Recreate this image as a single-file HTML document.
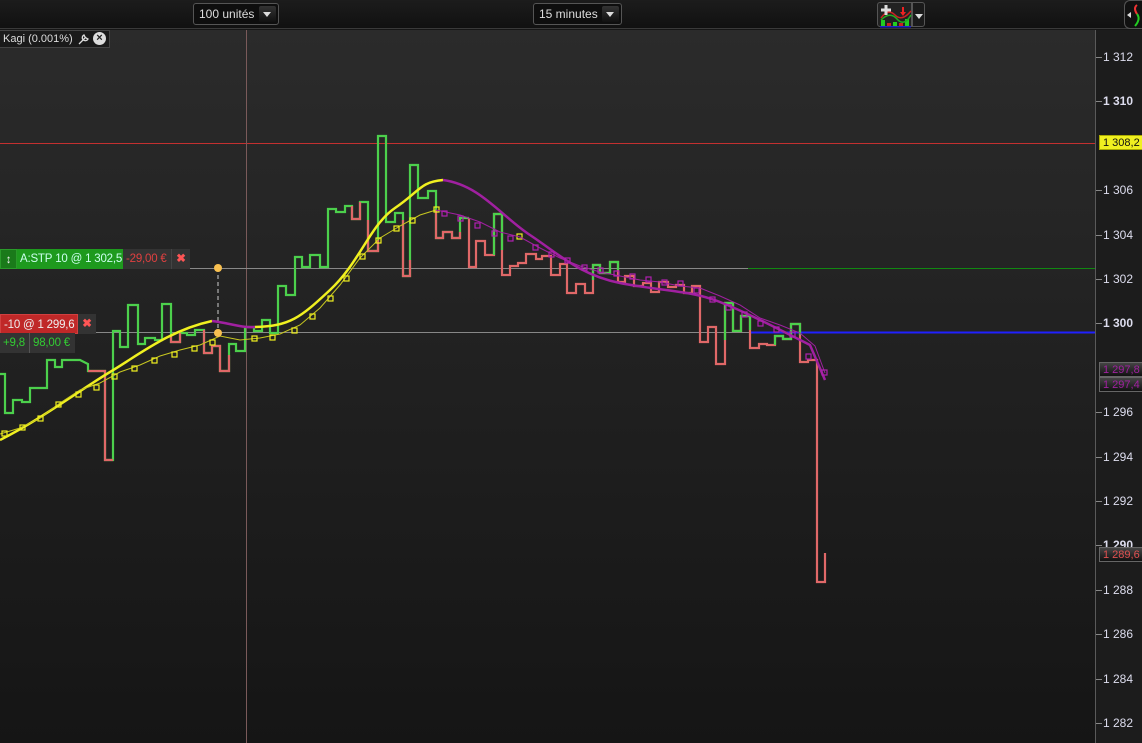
<!DOCTYPE html>
<html><head><meta charset="utf-8"><style>
*{margin:0;padding:0;box-sizing:border-box}
body{width:1142px;height:743px;overflow:hidden;background:#161616;font-family:"Liberation Sans",sans-serif;position:relative}
#top{position:absolute;left:0;top:0;width:1142px;height:29px;background:linear-gradient(#1c1c1c,#111);border-bottom:1px solid #3a3a3a}
.sel{position:absolute;top:3px;height:22px;border:1px solid #555;border-radius:3px;background:#0e0e0e;color:#ddd;font-size:12px;line-height:20px;padding-left:5px}
.sel .ar{position:absolute;right:2px;top:2px;width:17px;height:16px;background:linear-gradient(#333,#111);border-radius:2px}
.sel .ar:after{content:"";position:absolute;left:4px;top:6px;border:4px solid transparent;border-top:5px solid #ddd}
#chart{position:absolute;left:0;top:30px;width:1095px;height:713px;background:linear-gradient(#2b2b2b,#151515)}
#axis{position:absolute;left:1095px;top:30px;width:47px;height:713px;background:#1c1c1c;border-left:1px solid #5a5a5a}
.lb{position:absolute;left:1103px;font-size:12px;color:#dde;line-height:13px;white-space:nowrap}
.b{font-weight:bold}
.tk{position:absolute;left:1096px;width:6px;height:1px;background:#888}
.box{position:absolute;left:1099px;width:43px;height:15px;font-size:11px;line-height:14px;padding-left:3px;border:1px solid #666;border-right:none;white-space:nowrap;overflow:hidden}
#kagi{position:absolute;left:0;top:30px;height:18px;background:#1a1a1a;border:1px solid #444;border-left:none;color:#ddd;font-size:11px;line-height:16px;padding:0 3px;width:110px;white-space:nowrap}
.tag{position:absolute;font-size:11.5px;line-height:20px;height:20px;white-space:nowrap;overflow:hidden;letter-spacing:-0.2px}
</style></head><body>
<div id="top">
 <div class="sel" style="left:193px;width:86px">100 unités<div class="ar"></div></div>
 <div class="sel" style="left:533px;width:89px">15 minutes<div class="ar"></div></div>
 <div style="position:absolute;left:877px;top:2px;width:35px;height:25px;border:1px solid #555;border-radius:3px 0 0 3px;background:#222">
  <svg width="35" height="25"><rect x="3" y="17" width="4" height="6" fill="#2c2"/><rect x="9" y="20" width="4" height="3" fill="#c22"/><rect x="15" y="19" width="4" height="4" fill="#2c2"/><rect x="21" y="20" width="4" height="3" fill="#c22"/><rect x="27" y="16" width="4" height="7" fill="#2c2"/><rect x="2" y="23" width="31" height="1.5" fill="#22c"/><path d="M3 15 Q10 5 17 12 T33 8" stroke="#c22" fill="none" stroke-width="1.5"/><path d="M3 17 Q12 8 19 16 T33 12" stroke="#2a2" fill="none" stroke-width="1.5"/><path d="M8 2v10M3 7h10" stroke="#ddd" stroke-width="3"/><path d="M24 4v5h-2l3 4 3-4h-2V4z" fill="#e22"/></svg></div>
 <div style="position:absolute;left:912px;top:2px;width:13px;height:25px;border:1px solid #555;border-radius:0 3px 3px 0;background:#1a1a1a"><div style="position:absolute;left:2px;top:11px;border:4px solid transparent;border-top:5px solid #ddd"></div></div>
 <div style="position:absolute;left:1124px;top:0;width:18px;height:29px;border:1px solid #555;border-right:none;border-radius:6px 0 0 6px;background:#111"><svg width="18" height="29"><path d="M2 14l4-3v6z" fill="#ddd"/><path d="M12 4q-4 3 0 9" stroke="#e33" stroke-width="2" fill="none"/><path d="M12 13q4 5 -2 12" stroke="#2c2" stroke-width="2" fill="none"/></svg></div>
</div>
<div id="chart"></div>
<div id="axis"></div>
<div style="position:absolute;left:0;top:143px;width:1095px;height:1px;background:#c43030"></div>
<svg style="position:absolute;left:0;top:0" width="1095" height="743">
 <line x1="246.5" y1="30" x2="246.5" y2="743" stroke="#7a5a5a" stroke-width="1"/>
 <line x1="0" y1="268.5" x2="748" y2="268.5" stroke="#888"/>
 <line x1="748" y1="268.5" x2="1095" y2="268.5" stroke="#118811"/>
 <line x1="0" y1="332.5" x2="750" y2="332.5" stroke="#888"/>
 <line x1="750" y1="332.5" x2="1095" y2="332.5" stroke="#2020ff" stroke-width="2"/>
 <line x1="218" y1="268" x2="218" y2="333" stroke="#ccc" stroke-dasharray="4,3"/>
 <g fill="none" stroke-width="2.2" stroke-linejoin="miter">
 <polyline stroke="#4cd04c" points="0,374 5,374 5,413 13,413 13,400 22,400 22,402 30,402 30,388 47,388 47,360 55,360 55,367 62,367 62,360 80,360 88,364 88,371 105,371 105,460 113,460 113,331 120,331 120,347 128,347 128,305 138,305 138,344 145,344 145,338 155,338 155,340 162,340 162,304 171,304 171,342 180,342 180,333 187,333 187,335 195,335 195,330 204,330 204,353 212,353 212,346 220,346 220,371 229,371 229,344 236,344 236,351 245,351 245,327 254,327 254,331 262,331 262,320 270,320 270,333 278,333 278,286 286,286 286,295 295,295 295,257 302,257 302,267 310,267 310,255 320,255 320,267 328,267 328,209 336,209 336,212 345,212 345,206 352,206 352,219 360,219 360,202 368,202 368,251 378,251 378,136 386,136 386,222 395,222 395,213 403,213 403,276 410,276 410,165 418,165 418,198 428,198 428,191 436,191 436,238 443,238 443,232 452,232 452,238 460,238 460,218 469,218"/>
 <polyline stroke="#e06868" points="88,371 105,371 105,460 113,460"/>
 <polyline stroke="#e06868" points="171,335 171,342 180,342 180,333"/>
 <polyline stroke="#e06868" points="204,330 204,353 212,353 212,346 220,346 220,371 229,371 229,355"/>
 <polyline stroke="#e06868" points="352,206 352,219 360,219 360,202"/>
 <polyline stroke="#e06868" points="368,220 368,251 378,251 378,240"/>
 <polyline stroke="#e06868" points="403,220 403,276 410,276 410,260"/>
 <polyline stroke="#e06868" points="436,210 436,238 443,238 443,232 452,232 452,238 460,238 460,232"/>
 <polyline stroke="#e06868" points="469,218 469,267 476,267 476,241 485,241 485,255 494,255 494,214 502,214 502,275 510,275 510,266 518,266 518,263 526,263 526,254 536,254 536,259 542,259 542,256 551,256 551,275 560,275 560,264 567,264 567,293 576,293 576,284 585,284 585,293 593,293 593,265 600,265 600,273 610,273 610,262 618,262 618,282 625,282 625,276 634,276 634,286 643,286 643,283 651,283 651,292 659,292 659,282 668,282 668,287 676,287 676,285 684,285 684,293 692,293 692,286 700,286 700,342 708,342 708,327 716,327 716,364 725,364 725,303 733,303 733,331 741,331 741,316 750,316 750,348 759,348 759,344 767,344 767,345 775,345 775,336 783,336 783,339 791,339 791,324 800,324 800,362 808,362 808,360 817,360 817,582 825,582 825,553"/>
 <polyline stroke="#4cd04c" points="494,255 494,214 502,214 502,250"/>
 <polyline stroke="#4cd04c" points="593,280 593,265 600,265 600,273 610,273 610,262 618,262 618,270"/>
 <polyline stroke="#4cd04c" points="725,340 725,303 733,303 733,331 741,331 741,316 750,316 750,330"/>
 <polyline stroke="#4cd04c" points="775,345 775,336 783,336 783,339 791,339 791,324 800,324 800,335"/>
 </g>
 <path d="M0,440 C40,420 80,390 110,372 S170,330 212,321" stroke="#f0f020" stroke-width="2.5" fill="none"/>
 <path d="M212,321 C230,323 240,328 255,327" stroke="#a020a0" stroke-width="2.5" fill="none"/>
 <path d="M255,327 C290,326 300,318 330,290 S370,225 395,208 S420,182 443,180" stroke="#f0f020" stroke-width="2.5" fill="none"/>
 <path d="M443,180 C480,185 500,215 530,235 S580,275 620,283 S690,290 720,302 S780,330 810,345 L825,380" stroke="#a020a0" stroke-width="2.5" fill="none"/>
 <polyline points="0,434 20,428 40,418 60,403 80,390 100,383 120,372 140,365 160,356 180,350 200,345 220,336 240,340 260,338 280,334 300,325 320,308 340,285 360,258 380,238 400,226 420,215 436,210" stroke="#c8c820" stroke-width="1" fill="none"/>
 <g fill="none" stroke="#f0f020" stroke-width="1.2">
 <rect x="2" y="431" width="5" height="5"/><rect x="20" y="425" width="5" height="5"/><rect x="38" y="416" width="5" height="5"/><rect x="56" y="402" width="5" height="5"/><rect x="76" y="392" width="5" height="5"/><rect x="94" y="385" width="5" height="5"/><rect x="112" y="374" width="5" height="5"/><rect x="132" y="366" width="5" height="5"/><rect x="152" y="358" width="5" height="5"/><rect x="172" y="352" width="5" height="5"/><rect x="192" y="346" width="5" height="5"/><rect x="210" y="340" width="5" height="5"/><rect x="252" y="336" width="5" height="5"/><rect x="270" y="335" width="5" height="5"/><rect x="292" y="328" width="5" height="5"/><rect x="310" y="314" width="5" height="5"/><rect x="328" y="296" width="5" height="5"/><rect x="344" y="276" width="5" height="5"/><rect x="360" y="254" width="5" height="5"/><rect x="376" y="238" width="5" height="5"/><rect x="394" y="226" width="5" height="5"/><rect x="410" y="218" width="5" height="5"/><rect x="434" y="207" width="5" height="5"/><rect x="517" y="234" width="5" height="5"/>
 </g>
 <polyline points="436,210 460,215 480,222 500,232 520,237 540,248 560,258 580,266 600,272 620,276 640,280 660,282 680,286 700,288 720,296 740,305 760,318 780,325 800,333 815,346 825,373" stroke="#a020a0" stroke-width="1" fill="none"/>
 <g fill="none" stroke="#b020b0" stroke-width="1.2">
 <rect x="442" y="211" width="5" height="5"/><rect x="458" y="216" width="5" height="5"/><rect x="475" y="223" width="5" height="5"/><rect x="492" y="231" width="5" height="5"/><rect x="508" y="236" width="5" height="5"/><rect x="533" y="245" width="5" height="5"/><rect x="549" y="252" width="5" height="5"/><rect x="565" y="258" width="5" height="5"/><rect x="582" y="265" width="5" height="5"/><rect x="598" y="268" width="5" height="5"/><rect x="614" y="271" width="5" height="5"/><rect x="630" y="274" width="5" height="5"/><rect x="646" y="277" width="5" height="5"/><rect x="662" y="280" width="5" height="5"/><rect x="678" y="281" width="5" height="5"/><rect x="694" y="288" width="5" height="5"/><rect x="710" y="297" width="5" height="5"/><rect x="726" y="305" width="5" height="5"/><rect x="742" y="312" width="5" height="5"/><rect x="758" y="321" width="5" height="5"/><rect x="774" y="327" width="5" height="5"/><rect x="790" y="332" width="5" height="5"/><rect x="806" y="354" width="5" height="5"/><rect x="822" y="370" width="5" height="5"/>
 </g>
 <circle cx="218" cy="268" r="4" fill="#f8c050"/><circle cx="218" cy="333" r="4" fill="#f8c050"/>
</svg>
<div id="kagi">Kagi (0.001%)</div>
<svg style="position:absolute;left:77px;top:32px" width="14" height="14"><path d="M2 12l6-6M7 3a3 3 0 1 0 4 4l-2-1-1-1z" stroke="#ddd" stroke-width="1.3" fill="none"/></svg>
<div style="position:absolute;left:93px;top:32px;width:13px;height:13px;border-radius:50%;background:#ddd;color:#222;font-size:11px;line-height:13px;text-align:center;font-weight:bold">×</div>
<div class="tag" style="left:0;top:249px;width:17px;background:#1a7a1a;border:1px solid #2a9a2a;color:#eee;text-align:center;font-weight:bold">↕</div>
<div class="tag" style="left:17px;top:249px;width:106px;background:#1e9a1e;color:#cfe;padding-left:3px">A:STP&nbsp;10 @ 1 302,5</div>
<div class="tag" style="left:123px;top:249px;width:48px;background:#333;color:#e04040;padding-left:3px">-29,00 €</div>
<div class="tag" style="left:171px;top:249px;width:19px;background:#333;border-left:1px solid #444;color:#f55;text-align:center;font-weight:bold">✖</div>
<div class="tag" style="left:0;top:314px;width:78px;background:#c02828;border:1px solid #d04040;color:#eee;padding-left:3px">-10 @ 1 299,6</div>
<div class="tag" style="left:78px;top:314px;width:18px;background:#333;color:#f55;text-align:center;font-weight:bold">✖</div>
<div class="tag" style="left:0;top:333px;width:30px;background:#333;color:#3c3;padding-left:3px;border-right:1px solid #555">+9,8</div>
<div class="tag" style="left:30px;top:333px;width:45px;background:#333;color:#3c3;padding-left:3px">98,00 €</div>
<div class="tk" style="top:57px"></div><div class="lb" style="top:51px">1 312</div>
<div class="tk" style="top:101px"></div><div class="lb b" style="top:95px">1 310</div>
<div class="tk" style="top:190px"></div><div class="lb" style="top:184px">1 306</div>
<div class="tk" style="top:235px"></div><div class="lb" style="top:229px">1 304</div>
<div class="tk" style="top:279px"></div><div class="lb" style="top:273px">1 302</div>
<div class="tk" style="top:323px"></div><div class="lb b" style="top:317px">1 300</div>
<div class="tk" style="top:412px"></div><div class="lb" style="top:406px">1 296</div>
<div class="tk" style="top:457px"></div><div class="lb" style="top:451px">1 294</div>
<div class="tk" style="top:501px"></div><div class="lb" style="top:495px">1 292</div>
<div class="tk" style="top:545px"></div><div class="lb b" style="top:539px">1 290</div>
<div class="tk" style="top:590px"></div><div class="lb" style="top:584px">1 288</div>
<div class="tk" style="top:634px"></div><div class="lb" style="top:628px">1 286</div>
<div class="tk" style="top:679px"></div><div class="lb" style="top:673px">1 284</div>
<div class="tk" style="top:723px"></div><div class="lb" style="top:717px">1 282</div>
<div class="box" style="top:135px;background:#f0f020;color:#111;border-color:#aa0">1 308,2</div>
<div class="box" style="top:362px;background:linear-gradient(#444,#111);color:#a020a0">1 297,8</div>
<div class="box" style="top:377px;background:linear-gradient(#444,#111);color:#a020a0">1 297,4</div>
<div class="box" style="top:547px;background:linear-gradient(#444,#111);color:#e05050">1 289,6</div>
</body></html>
